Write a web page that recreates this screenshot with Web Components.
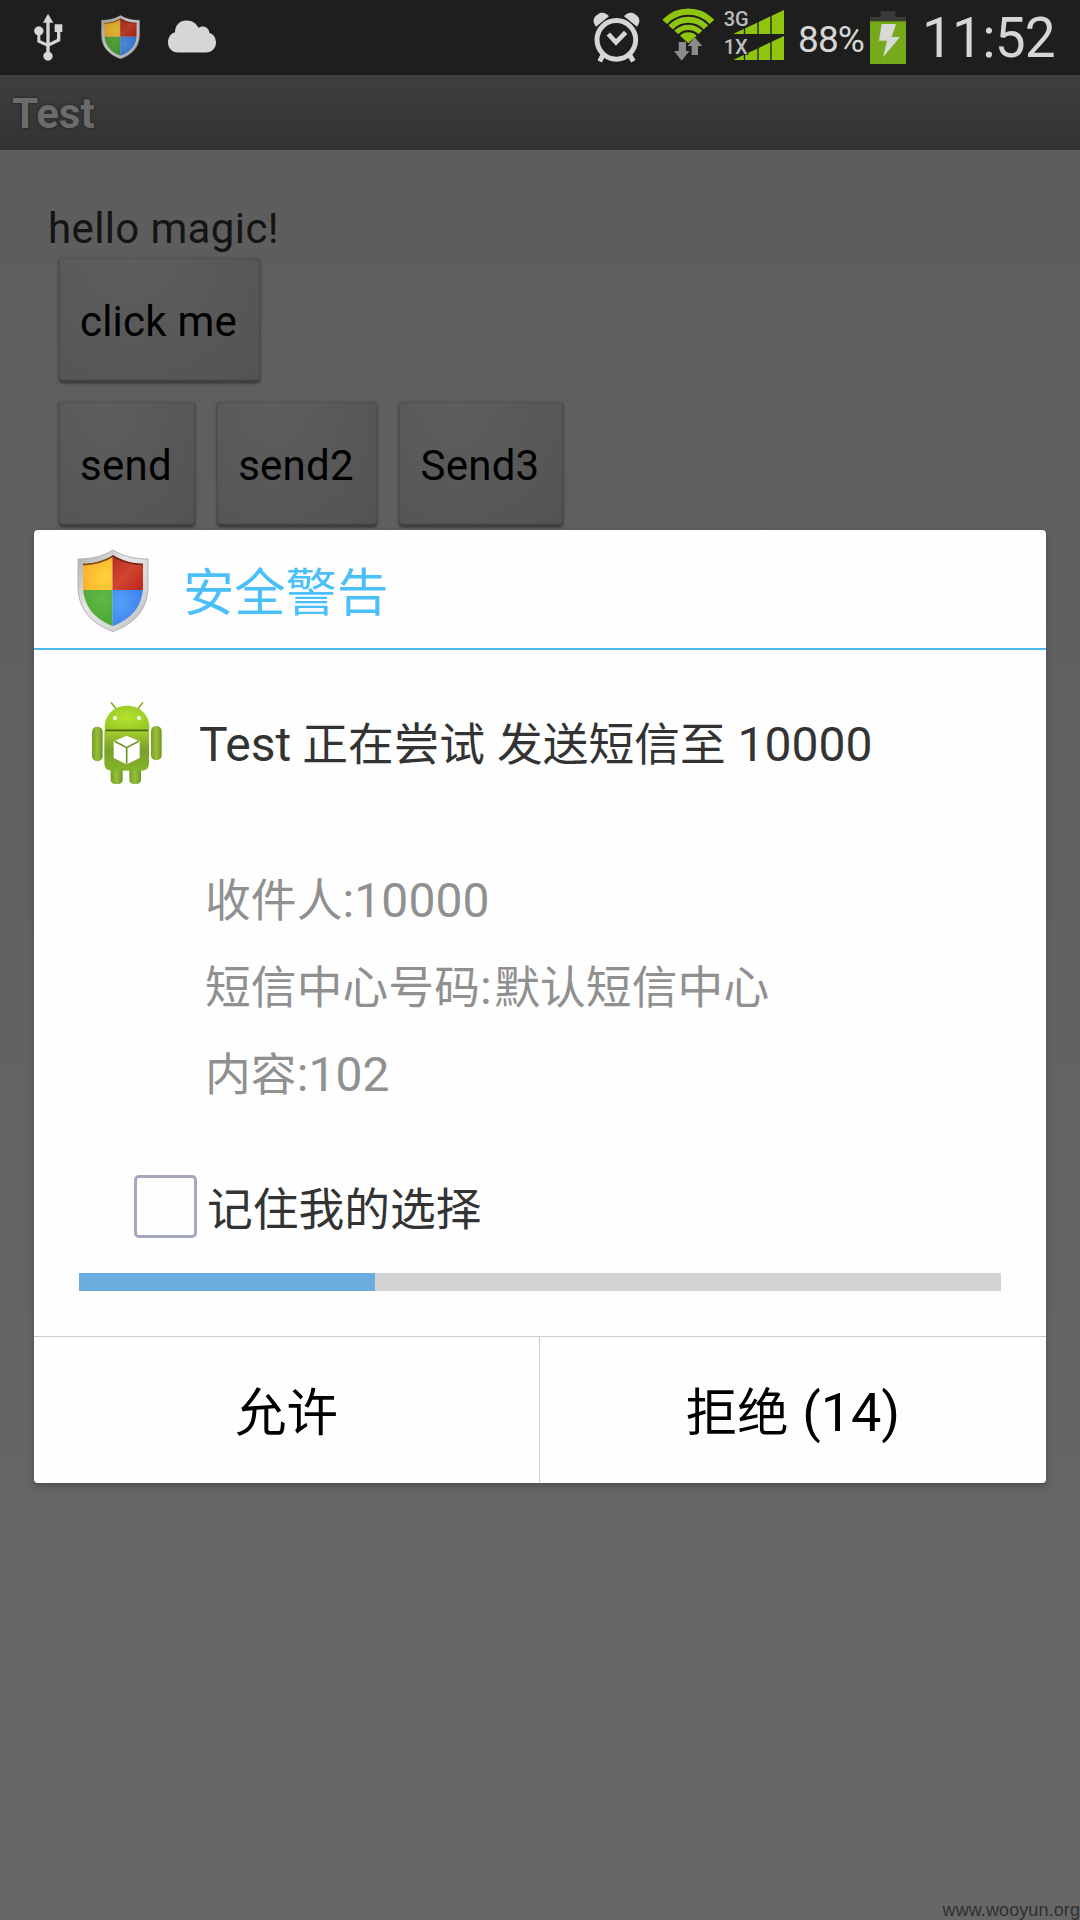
<!DOCTYPE html>
<html lang="zh-CN">
<head>
<meta charset="utf-8">
<title>Test</title>
<style>
html,body{margin:0;padding:0}
body{width:1080px;height:1920px;overflow:hidden;font-family:Roboto,"Noto Sans CJK SC",sans-serif;background:#5d5d5d}
</style>
</head>
<body>
<phone-screen>
  <status-bar slot="status"></status-bar>
  <title-bar slot="title">Test</title-bar>
  <app-content slot="content">
    <span slot="hello">hello magic!</span>
    <holo-button slot="first" style="width:201px">click me</holo-button>
    <holo-button slot="row" style="width:136px">send</holo-button>
    <holo-button slot="row" style="width:160px">send2</holo-button>
    <holo-button slot="row" style="width:164px">Send3</holo-button>
  </app-content>
  <alert-dialog slot="dialog">
    <span slot="title">安全警告</span>
    <span slot="message">Test <cjk-run style="margin-left:-1px">正在尝试</cjk-run> <cjk-run>发送短信至</cjk-run> 10000</span>
    <detail-line slot="details"><cjk-run>收件人</cjk-run>:10000</detail-line>
    <detail-line slot="details"><cjk-run>短信中心号码</cjk-run>:<cjk-run style="margin-left:-9px">默认短信中心</cjk-run></detail-line>
    <detail-line slot="details"><cjk-run>内容</cjk-run>:102</detail-line>
    <check-box slot="remember"><cjk-run>记住我的选择</cjk-run></check-box>
    <count-bar slot="progress" style="--done:296px"></count-bar>
    <dialog-action slot="actions"><cjk-run>允许</cjk-run></dialog-action>
    <dialog-action slot="actions"><cjk-run>拒绝</cjk-run> (14)</dialog-action>
  </alert-dialog>
  <span slot="mark">www.wooyun.org</span>
</phone-screen>
<script>
function define(name, html) {
  customElements.define(name, class extends HTMLElement {
    constructor() {
      super();
      this.attachShadow({ mode: 'open' }).innerHTML = html;
    }
  });
}

define('phone-screen', `
<style>
:host{display:flex;flex-direction:column;position:relative;width:1080px;height:1920px;background:linear-gradient(#5d5d5d 150px,#5f5f5f 500px,#656565 1500px,#676767)}
slot[name=content]{display:block;flex:1}
.overlay{position:absolute;left:34px;top:530px;width:1012px}
.mark{position:absolute;right:0;bottom:0;font:18px/20px "Liberation Sans",sans-serif;letter-spacing:.1px;color:#303030;white-space:nowrap}
</style>
<slot name="status"></slot><slot name="title"></slot><slot name="content"></slot>
<div class="overlay"><slot name="dialog"></slot></div>
<div class="mark"><slot name="mark"></slot></div>`);

define('cjk-run', `
<style>:host{display:inline;font-size:.953em;line-height:0}</style><slot></slot>`);

define('security-shield', `
<style>:host{display:block}svg{display:block;width:100%;height:100%}</style>
<svg viewBox="0 0 72 83" preserveAspectRatio="none">
<defs>
<linearGradient id="rim" x1="0" y1="0" x2="1" y2="1"><stop offset="0" stop-color="#aaa"/><stop offset=".4" stop-color="#e6e6e6"/><stop offset=".75" stop-color="#d4d4d4"/><stop offset="1" stop-color="#a8a8a8"/></linearGradient>
<radialGradient id="y" cx=".8" cy=".7" r="1"><stop offset="0" stop-color="#ffd23c"/><stop offset=".6" stop-color="#fcb52b"/><stop offset="1" stop-color="#ef8a1a"/></radialGradient>
<linearGradient id="r" x1="0" y1="0" x2="1" y2="1"><stop offset="0" stop-color="#b02a1c"/><stop offset=".5" stop-color="#d24530"/><stop offset="1" stop-color="#b51f12"/></linearGradient>
<radialGradient id="g" cx=".7" cy=".2" r="1"><stop offset="0" stop-color="#62b944"/><stop offset=".7" stop-color="#4aa534"/><stop offset="1" stop-color="#23821b"/></radialGradient>
<radialGradient id="b" cx=".2" cy=".3" r="1"><stop offset="0" stop-color="#55a0f8"/><stop offset=".6" stop-color="#3c85ee"/><stop offset="1" stop-color="#1747cf"/></radialGradient>
<clipPath id="c"><path d="M36 6C27 12 16 14.500 6 14.500V36C6 58 18 70 36 77C54 70 66 58 66 36V14.500C56 14.500 45 12 36 6Z"/></clipPath>
</defs>
<path d="M36 1C26 7.500 13 10 1 10V37C1 61 15 75 36 82.500C57 75 71 61 71 37V10C59 10 46 7.500 36 1Z" fill="url(#rim)" stroke="#b4b4b4" stroke-width="1"/>
<g clip-path="url(#c)"><path fill="url(#y)" d="M0 0H35.500V41H0Z"/><path fill="url(#r)" d="M35.500 0H72V41H35.500Z"/><path fill="url(#g)" d="M0 41H35.500V83H0Z"/><path fill="url(#b)" d="M35.500 41H72V83H35.500Z"/>
<path d="M5 15.500C16 15 27 13 36 7C45 13 56 15 67 15.500" fill="none" stroke="#5b2413" stroke-width="2" opacity=".8"/></g>
</svg>`);

define('status-bar', `
<style>
:host{display:flex;box-sizing:border-box;height:75px;width:1080px;background:#1e1e1e;color:#d6d6d6;align-items:flex-start;padding-left:33px}
svg{display:block;flex:none}
.shield{width:39px;height:44px;margin:15px 0 0 37px;filter:brightness(.86)}
.percent{font-size:37px;line-height:40px;width:65px;margin:20px 0 0 14px;letter-spacing:-.9px;white-space:nowrap}
.clock{font-size:55px;line-height:60px;margin:8px 0 0 16px;letter-spacing:-.8px;white-space:nowrap}
</style>
<svg style="margin-top:13px" width="31" height="49" viewBox="100 40 93 147" fill="#d6d6d6"><path d="M145 42L161 69H150V129L172 118V97H165V74H188V97H182V124L150 140V156A14 14 0 1 1 140 156V140L113 128V107A14 14 0 1 1 122 107V122L140 130V69H130Z"/></svg>
<security-shield class="shield"></security-shield>
<svg style="margin:20px 0 0 28px" width="48" height="33" viewBox="0 0 48 33" fill="#d6d6d6"><path d="M10 32.500C4 32.500 0 28 0 22.500C0 17 3 13.500 7 12.300C7 5 12 .5 18.500 .5C24.500 .5 29 4 30.500 8C35 4.500 41 7.500 41.500 13C45.500 14 48 18 48 22.500C48 28 44 32.500 38 32.500Z"/></svg>
<svg style="margin:11px 0 0 376px" width="49" height="52" viewBox="66 33 147 156" fill="none" stroke="#d6d6d6"><circle cx="139" cy="119.500" r="58" stroke-width="15"/><path d="M115 102L138 127L167 97" stroke-width="14"/><path d="M99 165L89 184M179 165L190 184" stroke-width="15"/><path fill="#d6d6d6" stroke="none" d="M78 80L117 49C108 38 94 35 84 43C71 50 65 63 78 80ZM201 80L162 49C171 38 185 35 195 43C208 50 214 63 201 80Z"/></svg>
<svg style="margin:8px 0 0 21px" width="54" height="54" viewBox="276 24 162 162"><defs><clipPath id="w"><path d="M355 130L270 53V0H440V53Z"/></clipPath></defs><g clip-path="url(#w)" fill="none" stroke="#8fc50d"><circle cx="355" cy="132" r="97" stroke-width="19"/><circle cx="355" cy="132" r="73" stroke-width="18"/><circle cx="355" cy="132" r="50" stroke-width="16"/><circle cx="355" cy="132" r="18" stroke-width="35"/></g><path fill="#8b8b8b" d="M326 126H348V153H358L335 182L312 153H326ZM374 112L397 138H384V165H365V138H353Z"/></svg>
<svg style="margin:8px 0 0 8px" width="60" height="54" viewBox="0 0 60 54"><path fill="#8fc50d" d="M9 26L60 2V26ZM9 52L60 28V52Z"/><path d="M20.500 0V54M34 0V54M47 0V54" stroke="#1e1e1e" stroke-width="1.300"/><g font-family="Roboto,sans-serif" font-size="20" font-weight="500" fill="#bdbdbd" stroke="#1e1e1e" stroke-width="1.600" paint-order="stroke"><text x="-.3" y="18">3G</text><text x="-.3" y="46">1X</text></g></svg>
<span class="percent">88%</span>
<svg style="margin:11px 0 0 7px" width="36" height="53" viewBox="240 33 108 159"><path fill="#3a3a3a" d="M272 33H316V51H348V65H240V51H272Z"/><path fill="#5e9010" d="M240 63H348V69H240Z"/><path fill="#76a91b" d="M240 67H348V192H240Z"/><path fill="#d8d8d8" d="M275 72H318L305 111H330L279 172L291 122H267Z"/></svg>
<span class="clock">11:52</span>`);

define('title-bar', `
<style>:host{display:block;box-sizing:border-box;height:75px;padding:1px 0 0 12px;background:linear-gradient(#3f3f3f,#333);color:#6b6b6b;font-size:42px;font-weight:700;line-height:75px;text-shadow:0 0 3px #1c1c1c}</style><slot></slot>`);

define('app-content', `
<style>
:host{display:block;padding:54px 48px 0}
.hello{display:block;height:49px;font-size:42px;line-height:49px;letter-spacing:.37px;color:#141414}
.row{display:flex;padding-left:11px}
.first{margin-top:5px}
.second{margin-top:20px;gap:22px}
</style>
<div class="hello"><slot name="hello"></slot></div>
<div class="row first"><slot name="first"></slot></div>
<div class="row second"><slot name="row"></slot></div>`);

define('holo-button', `
<style>:host{display:flex;box-sizing:border-box;height:124px;padding:3px 2px 0 0;align-items:center;justify-content:center;color:#000;font-size:42px;line-height:49px;letter-spacing:.25px;white-space:nowrap;border-radius:4px;background:radial-gradient(ellipse at 35% 0,#5e5e5e,#515151 120%);box-shadow:0 1px 3px #2c2c2c,inset 0 0 2px #444,inset 0 -2px 1px #3f3f3f}</style><slot></slot>`);

define('android-robot', `
<style>:host{display:block;width:70px;height:82px;margin-top:-2px}svg{display:block}</style>
<svg width="70" height="82" viewBox="96 66 210 246"><defs>
<linearGradient id="a" x2="1"><stop offset="0" stop-color="#749f25"/><stop offset=".5" stop-color="#97bf3b"/><stop offset="1" stop-color="#6c9722"/></linearGradient>
<linearGradient id="t" x2="0" y2="1"><stop offset="0" stop-color="#a5cf2e"/><stop offset=".5" stop-color="#789f29"/><stop offset="1" stop-color="#85b52b"/></linearGradient>
<radialGradient id="h" cx=".5" cy=".5" r=".65"><stop offset="0" stop-color="#b5e32e"/><stop offset="1" stop-color="#92c621"/></radialGradient></defs>
<path d="M153 67L169 88M249 67L233 88" stroke="#89b32d" stroke-width="5"/>
<g fill="url(#a)"><rect x="152" y="250" width="36" height="62" rx="13"/><rect x="208" y="250" width="35" height="62" rx="13"/><rect x="96" y="140" width="32" height="104" rx="15"/><rect x="273" y="138" width="32" height="103" rx="15"/></g>
<path fill="url(#t)" d="M133 150H267V250Q267 272 246 272H154Q133 272 133 250Z"/>
<path fill="url(#h)" d="M134 143C134 104 162 77 201 77S268 104 268 143Q268 150 260 150H142Q134 150 134 143Z"/>
<path d="M136 151H266" stroke="#4b6914" stroke-width="5"/><circle cx="165" cy="114" r="6" fill="#fff"/><circle cx="237" cy="114" r="6" fill="#fff"/>
<path fill="#fff" d="M200 167L239 184V234L200 253L161 234V184Z"/><path d="M164 184L200 203L236 184M200 203V251" fill="none" stroke="#6b9426" stroke-width="5"/>
</svg>`);

define('detail-line', `<style>:host{display:block;height:87px;line-height:87px;white-space:nowrap}</style><slot></slot>`);

define('check-box', `
<style>:host{display:flex;align-items:center;height:63px;font-size:48px;line-height:63px;color:#333;white-space:nowrap}
i{box-sizing:border-box;width:63px;height:63px;border:3px solid #a4a8bc;border-radius:5px;margin-right:10px}
span{padding-top:5px}</style><i></i><span><slot></slot></span>`);

define('count-bar', `
<style>:host{display:block;height:18px;background:#d3d3d3}i{display:block;height:18px;width:var(--done);background:#6badde}</style><i></i>`);

define('dialog-action', `
<style>:host{display:block;flex:1;box-sizing:border-box;height:146px;padding-top:3px;line-height:146px;font-size:54px;text-align:center;color:#000;white-space:nowrap}
:host(:first-of-type){flex:0 0 506px;border-right:1px solid #c9ced2}</style><slot></slot>`);

define('alert-dialog', `
<style>
:host{display:block;height:953px;border-radius:4px;background:#fefefe;box-shadow:0 3px 6px rgba(0,0,0,.22);overflow:visible}
header{display:flex;align-items:flex-start;box-sizing:border-box;height:120px;border-bottom:2px solid #4fb8e8;padding-left:43px}
.shield{width:72px;height:83px;margin-top:19px}
h1{margin:5px 0 0 34px;font-size:51.300px;line-height:118px;font-weight:400;color:#4bbff8}
.app{display:flex;align-items:center;height:108px;padding:40px 0 0 58px}
.app p{margin:2px 0 0 37px;font-size:48px;line-height:108px;color:#333;white-space:nowrap}
.details{margin:59px 0 0 171px;font-size:48px;letter-spacing:.1px;color:#909090}
.remember{margin:57px 0 0 100px}
.progress{margin:35px 45px 0}
footer{display:flex;margin-top:45px;border-top:1px solid #c9ced2}
</style>
<header><security-shield class="shield"></security-shield><h1><slot name="title"></slot></h1></header>
<div class="app"><android-robot></android-robot><p><slot name="message"></slot></p></div>
<div class="details"><slot name="details"></slot></div>
<div class="remember"><slot name="remember"></slot></div>
<div class="progress"><slot name="progress"></slot></div>
<footer><slot name="actions"></slot></footer>`);
</script>
</body>
</html>
